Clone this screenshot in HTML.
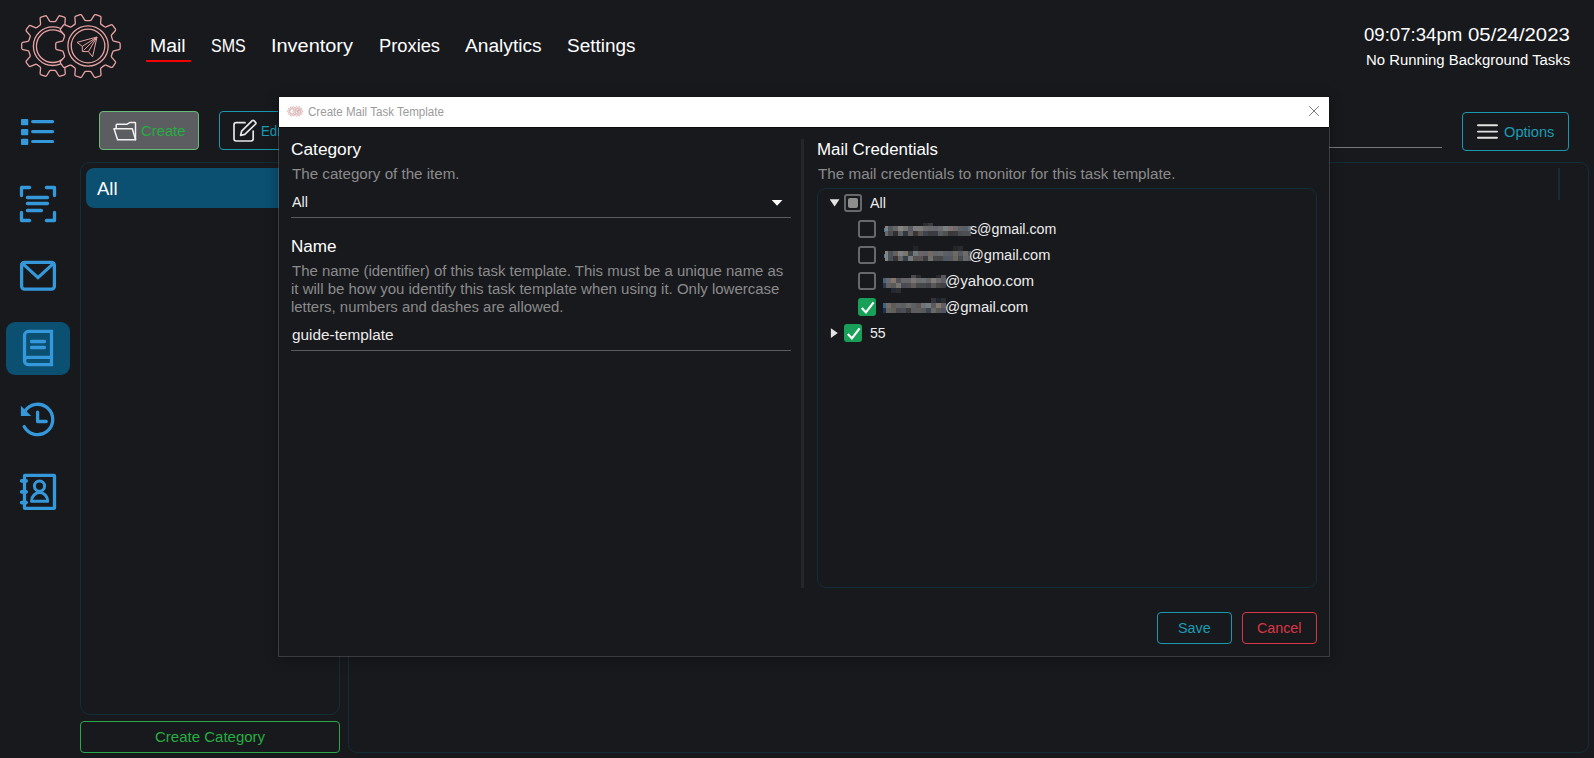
<!DOCTYPE html><html lang="en"><head><meta charset="utf-8"><title>Create Mail Task Template</title><style>
html,body{margin:0;padding:0}
body{width:1594px;height:758px;background:#18191d;position:relative;overflow:hidden;font-family:"Liberation Sans",sans-serif}
.t{position:absolute;white-space:nowrap;transform-origin:0 0;line-height:1;display:block}
.a{position:absolute;box-sizing:border-box}
svg{position:absolute;left:0;top:0;overflow:visible}
.px i{position:absolute;display:block}
.cb{position:absolute;box-sizing:border-box;width:18px;height:18px;border:2px solid #67686b;border-radius:3px}
.cb.on{border:none;background:#18a058}
</style></head><body>
<svg width="1594" height="100" viewBox="0 0 1594 100"><g fill="none" stroke="#e8a2a2" stroke-width="1.3" stroke-linejoin="round"><path d="M76.43,51.74Q76.71,50.88 77.59,50.68L82.61,49.52Q83.73,49.26 83.73,48.11L83.73,43.89Q83.73,42.74 82.61,42.48L77.59,41.32Q76.71,41.12 76.43,40.26L75.27,36.70Q74.99,35.84 75.58,35.16L78.97,31.27Q79.72,30.40 79.04,29.47L76.56,26.05Q75.89,25.12 74.83,25.57L70.08,27.59Q69.25,27.94 68.52,27.41L65.49,25.21Q64.76,24.68 64.84,23.78L65.29,18.64Q65.39,17.50 64.30,17.14L60.28,15.84Q59.19,15.48 58.59,16.47L55.94,20.89Q55.47,21.66 54.57,21.66L50.83,21.66Q49.93,21.66 49.46,20.89L46.81,16.47Q46.21,15.48 45.12,15.84L41.10,17.14Q40.01,17.50 40.11,18.64L40.56,23.78Q40.64,24.68 39.91,25.21L36.88,27.41Q36.15,27.94 35.32,27.59L30.57,25.57Q29.51,25.12 28.84,26.05L26.36,29.47Q25.68,30.40 26.43,31.27L29.82,35.16Q30.41,35.84 30.13,36.70L28.97,40.26Q28.69,41.12 27.81,41.32L22.79,42.48Q21.67,42.74 21.67,43.89L21.67,48.11Q21.67,49.26 22.79,49.52L27.81,50.68Q28.69,50.88 28.97,51.74L30.13,55.30Q30.41,56.16 29.82,56.84L26.43,60.73Q25.68,61.60 26.36,62.53L28.84,65.95Q29.51,66.88 30.57,66.43L35.32,64.41Q36.15,64.06 36.88,64.59L39.91,66.79Q40.64,67.32 40.56,68.22L40.11,73.36Q40.01,74.50 41.10,74.86L45.12,76.16Q46.21,76.52 46.81,75.53L49.46,71.11Q49.93,70.34 50.83,70.34L54.57,70.34Q55.47,70.34 55.94,71.11L58.59,75.53Q59.19,76.52 60.28,76.16L64.30,74.86Q65.39,74.50 65.29,73.36L64.84,68.22Q64.76,67.32 65.49,66.79L68.52,64.59Q69.25,64.06 70.08,64.41L74.83,66.43Q75.89,66.88 76.56,65.95L79.04,62.53Q79.72,61.60 78.97,60.73L75.58,56.84Q74.99,56.16 75.27,55.30Z"/><circle cx="52.7" cy="46.2" r="19.3"/><circle cx="52.7" cy="46.2" r="16.3"/><path d="M112.66,51.99Q112.94,51.13 113.81,50.93L119.05,49.70Q120.17,49.44 120.17,48.29L120.17,43.81Q120.17,42.66 119.05,42.40L113.81,41.17Q112.94,40.97 112.66,40.11L111.43,36.33Q111.15,35.48 111.74,34.79L115.26,30.72Q116.01,29.85 115.33,28.92L112.70,25.30Q112.03,24.37 110.97,24.82L106.01,26.90Q105.18,27.25 104.45,26.72L101.23,24.38Q100.51,23.86 100.58,22.96L101.03,17.60Q101.13,16.45 100.03,16.10L95.78,14.71Q94.69,14.36 94.09,15.34L91.30,19.94Q90.84,20.71 89.94,20.71L85.96,20.71Q85.06,20.71 84.60,19.94L81.81,15.34Q81.21,14.36 80.12,14.71L75.87,16.10Q74.77,16.45 74.87,17.60L75.32,22.96Q75.39,23.86 74.67,24.38L71.45,26.72Q70.72,27.25 69.89,26.90L64.93,24.82Q63.87,24.37 63.20,25.30L60.57,28.92Q59.89,29.85 60.64,30.72L64.16,34.79Q64.75,35.48 64.47,36.33L63.24,40.11Q62.96,40.97 62.09,41.17L56.85,42.40Q55.73,42.66 55.73,43.81L55.73,48.29Q55.73,49.44 56.85,49.70L62.09,50.93Q62.96,51.13 63.24,51.99L64.47,55.77Q64.75,56.62 64.16,57.31L60.64,61.38Q59.89,62.25 60.57,63.18L63.20,66.80Q63.87,67.73 64.93,67.28L69.89,65.20Q70.72,64.85 71.45,65.38L74.67,67.72Q75.39,68.24 75.32,69.14L74.87,74.50Q74.77,75.65 75.87,76.00L80.12,77.39Q81.21,77.74 81.81,76.76L84.60,72.16Q85.06,71.39 85.96,71.39L89.94,71.39Q90.84,71.39 91.30,72.16L94.09,76.76Q94.69,77.74 95.78,77.39L100.03,76.00Q101.13,75.65 101.03,74.50L100.58,69.14Q100.51,68.24 101.23,67.72L104.45,65.38Q105.18,64.85 106.01,65.20L110.97,67.28Q112.03,67.73 112.70,66.80L115.33,63.18Q116.01,62.25 115.26,61.38L111.74,57.31Q111.15,56.62 111.43,55.77Z" fill="#18191d"/><circle cx="88.05" cy="46" r="20.15"/><circle cx="88.05" cy="46" r="16.8"/><path d="M97,37 L77,42.35 L82.3,46.35 V51.55 H88.4 L92.6,56.8 Z M97,37 L82.3,46.35 M96.6,37.6 L83.6,50.4 M97,37 L88.4,51.55" stroke-width="1"/></g></svg>
<div class="a" style="left:146px;top:60px;width:45px;height:2px;background:#f40000"></div>
<div class="a" style="left:6px;top:322px;width:64px;height:53px;border-radius:9px;background:#0b4f71"></div>
<svg width="80" height="758" viewBox="0 0 80 758"><g fill="none" stroke="#3498db" stroke-width="3.3" stroke-linecap="round" stroke-linejoin="round"><g fill="#3498db" stroke="none"><rect x="21" y="119" width="7.3" height="6.2" rx="1"/><rect x="21" y="129" width="7.3" height="6.2" rx="1"/><rect x="21" y="138.8" width="7.3" height="6.2" rx="1"/></g><path d="M32.6,121.6H52.6M32.6,131.6H52.6M32.6,141.5H52.6" stroke-width="3.1"/><path d="M21.5,195.6V187.5H29.6M46.4,187.5H54.5V195.6M54.5,212.4V220.5H46.4M29.6,220.5H21.5V212.4"/><path d="M27.4,197.5H47.5M27.4,203.5H47.5M27.4,210.5H41.4"/><rect x="21.6" y="262.3" width="32.8" height="26.9" rx="3"/><path d="M22.4,263.4L38,277.6L53.6,263.4" stroke-linejoin="miter"/><path d="M51.5,331.4H28.5a4,4 0 0 0 -4,4V360.7a4,4 0 0 0 4,4H51.5Z" stroke-linejoin="miter"/><path d="M24.5,360.4a3,3 0 0 1 3,-3H51.5" stroke-linecap="butt"/><path d="M31.5,341.5H44.5M31.5,347.5H44.5"/><path d="M24.13,426.59A15.2,15.2 0 1 0 24.80,411.17"/><path d="M20.9,405.7V415.9H31.2Z" fill="#3498db" stroke="none"/><path d="M37.6,412.2V421.5H46.2"/><rect x="24.5" y="475.4" width="30" height="33" rx="0.5" stroke-linejoin="miter"/><path d="M21.6,480.9H26.2M21.6,491.9H26.2M21.6,502.6H26.2" stroke-width="3.6"/><circle cx="39.5" cy="486.1" r="5.1" stroke-width="3"/><path d="M31.5,501.2a8.1,8.6 0 0 1 16.2,0Z" stroke-width="3"/></g></svg>
<div class="a" style="left:99px;top:111px;width:100px;height:39px;border:1px solid #68bc78;border-radius:4px;background:#5c5d61"></div>
<svg width="300" height="160" viewBox="0 0 300 160"><g transform="translate(0.4,0.5)" fill="none" stroke="#f2f2f2" stroke-width="1.5" stroke-linejoin="round" stroke-linecap="round"><path d="M115.8,127.6V124.6a0.8,0.8 0 0 1 .8,-.8H126.4L128.8,122.3a1.5,1.5 0 0 1 .8,-.3H134.4a.7,.7 0 0 1 .7,.7V139.2"/><path d="M113.6,128.2H131.9L135.2,139.3H117.2Z"/></g><g fill="none" stroke="#e6e6e6" stroke-width="1.7" stroke-linejoin="round" stroke-linecap="round"><path d="M245,122.7H236.2a2.2,2.2 0 0 0 -2.2,2.2V138.8a2.2,2.2 0 0 0 2.2,2.2H251a2.2,2.2 0 0 0 2.2,-2.2V131"/><path d="M240.6,135.4L241.6,131.2L252.2,120.6a1.2,1.2 0 0 1 1.7,0L255.6,122.3a1.2,1.2 0 0 1 0,1.7L244.8,134.4Z"/></g></svg>
<div class="a" style="left:219px;top:111px;width:90px;height:39px;border:1px solid #1899b0;border-radius:4px"></div>
<div class="a" style="left:1000px;top:147px;width:442px;height:1px;background:#77787a"></div>
<div class="a" style="left:1462px;top:112px;width:107px;height:39px;border:1px solid #1899b0;border-radius:4px"></div>
<svg width="1594" height="160" viewBox="0 0 1594 160"><path d="M1478,125.2H1497M1478,131.6H1497M1478,137.8H1497" stroke="#e2e2e2" stroke-width="1.9" stroke-linecap="round" fill="none"/></svg>
<div class="a" style="left:80px;top:162px;width:260px;height:553px;border:1px solid #132d39;border-radius:10px"></div>
<div class="a" style="left:86px;top:168px;width:248px;height:40px;border-radius:8px;background:#0b4f71"></div>
<div class="a" style="left:80px;top:721px;width:260px;height:32px;border:1px solid #2aa84a;border-radius:4px"></div>
<div class="a" style="left:348px;top:162px;width:1241px;height:591px;border:1px solid #132d39;border-radius:9px"></div>
<div class="a" style="left:1558px;top:168px;width:2px;height:32px;background:#132d39"></div>
<span class="t" style="left:150.32px;top:37.00px;font-size:18px;color:#ffffff;transform:scaleX(1.0805);">Mail</span>
<span class="t" style="left:211.30px;top:37.00px;font-size:18px;color:#ffffff;transform:scaleX(0.8897);">SMS</span>
<span class="t" style="left:271.49px;top:37.00px;font-size:18px;color:#ffffff;transform:scaleX(1.1063);">Inventory</span>
<span class="t" style="left:378.68px;top:37.00px;font-size:18px;color:#ffffff;transform:scaleX(1.0166);">Proxies</span>
<span class="t" style="left:465.20px;top:37.00px;font-size:18px;color:#ffffff;transform:scaleX(1.0635);">Analytics</span>
<span class="t" style="left:567.10px;top:37.00px;font-size:18px;color:#ffffff;transform:scaleX(1.0532);">Settings</span>
<span class="t" style="left:1364.20px;top:26.20px;font-size:18px;color:#ffffff;transform:scaleX(1.0332);">09:07:34pm</span>
<span class="t" style="left:1467.90px;top:26.20px;font-size:18px;color:#ffffff;transform:scaleX(1.1301);">05/24/2023</span>
<span class="t" style="left:1366.24px;top:52.80px;font-size:14px;color:#ffffff;transform:scaleX(1.0637);">No Running Background Tasks</span>
<span class="t" style="left:141.40px;top:123.80px;font-size:14px;color:#26ae41;transform:scaleX(1.0584);">Create</span>
<span class="t" style="left:260.96px;top:123.90px;font-size:14px;color:#1a9db4;transform:scaleX(0.9426);">Edit</span>
<span class="t" style="left:1504.40px;top:124.90px;font-size:14px;color:#1a9db4;transform:scaleX(1.0446);">Options</span>
<span class="t" style="left:97.40px;top:180.10px;font-size:18px;color:#ffffff;transform:scaleX(1.0261);">All</span>
<span class="t" style="left:155.10px;top:729.60px;font-size:14px;color:#26ae41;transform:scaleX(1.0719);">Create Category</span>
<div class="a" style="left:278px;top:96px;width:1052px;height:561px;background:#18191d;border:1px solid rgba(150,150,152,.3);border-top-color:#131418;background-clip:padding-box;box-shadow:0 2px 12px rgba(0,0,0,.28)"></div>
<div class="a" style="left:278px;top:96px;width:1px;height:31px;background:#131418"></div>
<div class="a" style="left:279px;top:97px;width:1050px;height:30px;background:#ffffff"></div>
<div class="a" style="left:1329px;top:96px;width:1px;height:31px;background:#131418"></div>
<div class="a" style="left:279px;top:127px;width:1050px;height:1px;background:#0b0c0e"></div>
<svg width="1594" height="130" viewBox="0 0 1594 130"><g transform="translate(284.2,104.2) scale(0.155)"><g stroke-width="5"><g fill="none" stroke="#cf9a9a" stroke-width="3.8" stroke-linejoin="round"><path d="M76.43,51.74Q76.71,50.88 77.59,50.68L82.61,49.52Q83.73,49.26 83.73,48.11L83.73,43.89Q83.73,42.74 82.61,42.48L77.59,41.32Q76.71,41.12 76.43,40.26L75.27,36.70Q74.99,35.84 75.58,35.16L78.97,31.27Q79.72,30.40 79.04,29.47L76.56,26.05Q75.89,25.12 74.83,25.57L70.08,27.59Q69.25,27.94 68.52,27.41L65.49,25.21Q64.76,24.68 64.84,23.78L65.29,18.64Q65.39,17.50 64.30,17.14L60.28,15.84Q59.19,15.48 58.59,16.47L55.94,20.89Q55.47,21.66 54.57,21.66L50.83,21.66Q49.93,21.66 49.46,20.89L46.81,16.47Q46.21,15.48 45.12,15.84L41.10,17.14Q40.01,17.50 40.11,18.64L40.56,23.78Q40.64,24.68 39.91,25.21L36.88,27.41Q36.15,27.94 35.32,27.59L30.57,25.57Q29.51,25.12 28.84,26.05L26.36,29.47Q25.68,30.40 26.43,31.27L29.82,35.16Q30.41,35.84 30.13,36.70L28.97,40.26Q28.69,41.12 27.81,41.32L22.79,42.48Q21.67,42.74 21.67,43.89L21.67,48.11Q21.67,49.26 22.79,49.52L27.81,50.68Q28.69,50.88 28.97,51.74L30.13,55.30Q30.41,56.16 29.82,56.84L26.43,60.73Q25.68,61.60 26.36,62.53L28.84,65.95Q29.51,66.88 30.57,66.43L35.32,64.41Q36.15,64.06 36.88,64.59L39.91,66.79Q40.64,67.32 40.56,68.22L40.11,73.36Q40.01,74.50 41.10,74.86L45.12,76.16Q46.21,76.52 46.81,75.53L49.46,71.11Q49.93,70.34 50.83,70.34L54.57,70.34Q55.47,70.34 55.94,71.11L58.59,75.53Q59.19,76.52 60.28,76.16L64.30,74.86Q65.39,74.50 65.29,73.36L64.84,68.22Q64.76,67.32 65.49,66.79L68.52,64.59Q69.25,64.06 70.08,64.41L74.83,66.43Q75.89,66.88 76.56,65.95L79.04,62.53Q79.72,61.60 78.97,60.73L75.58,56.84Q74.99,56.16 75.27,55.30Z"/><circle cx="52.7" cy="46.2" r="19.3"/><circle cx="52.7" cy="46.2" r="16.3"/><path d="M112.66,51.99Q112.94,51.13 113.81,50.93L119.05,49.70Q120.17,49.44 120.17,48.29L120.17,43.81Q120.17,42.66 119.05,42.40L113.81,41.17Q112.94,40.97 112.66,40.11L111.43,36.33Q111.15,35.48 111.74,34.79L115.26,30.72Q116.01,29.85 115.33,28.92L112.70,25.30Q112.03,24.37 110.97,24.82L106.01,26.90Q105.18,27.25 104.45,26.72L101.23,24.38Q100.51,23.86 100.58,22.96L101.03,17.60Q101.13,16.45 100.03,16.10L95.78,14.71Q94.69,14.36 94.09,15.34L91.30,19.94Q90.84,20.71 89.94,20.71L85.96,20.71Q85.06,20.71 84.60,19.94L81.81,15.34Q81.21,14.36 80.12,14.71L75.87,16.10Q74.77,16.45 74.87,17.60L75.32,22.96Q75.39,23.86 74.67,24.38L71.45,26.72Q70.72,27.25 69.89,26.90L64.93,24.82Q63.87,24.37 63.20,25.30L60.57,28.92Q59.89,29.85 60.64,30.72L64.16,34.79Q64.75,35.48 64.47,36.33L63.24,40.11Q62.96,40.97 62.09,41.17L56.85,42.40Q55.73,42.66 55.73,43.81L55.73,48.29Q55.73,49.44 56.85,49.70L62.09,50.93Q62.96,51.13 63.24,51.99L64.47,55.77Q64.75,56.62 64.16,57.31L60.64,61.38Q59.89,62.25 60.57,63.18L63.20,66.80Q63.87,67.73 64.93,67.28L69.89,65.20Q70.72,64.85 71.45,65.38L74.67,67.72Q75.39,68.24 75.32,69.14L74.87,74.50Q74.77,75.65 75.87,76.00L80.12,77.39Q81.21,77.74 81.81,76.76L84.60,72.16Q85.06,71.39 85.96,71.39L89.94,71.39Q90.84,71.39 91.30,72.16L94.09,76.76Q94.69,77.74 95.78,77.39L100.03,76.00Q101.13,75.65 101.03,74.50L100.58,69.14Q100.51,68.24 101.23,67.72L104.45,65.38Q105.18,64.85 106.01,65.20L110.97,67.28Q112.03,67.73 112.70,66.80L115.33,63.18Q116.01,62.25 115.26,61.38L111.74,57.31Q111.15,56.62 111.43,55.77Z" fill="#ffffff"/><circle cx="88.05" cy="46" r="20.15"/><circle cx="88.05" cy="46" r="16.8"/><path d="M97,37 L77,42.35 L82.3,46.35 V51.55 H88.4 L92.6,56.8 Z M97,37 L82.3,46.35 M96.6,37.6 L83.6,50.4 M97,37 L88.4,51.55" stroke-width="3.4"/></g></g></g><path d="M1309.5,106.5L1318.5,115.5M1318.5,106.5L1309.5,115.5" stroke="#7c7c7c" stroke-width="1" stroke-linecap="square" fill="none"/></svg>
<div class="a" style="left:291px;top:217px;width:500px;height:1px;background:#5a5b5e"></div>
<div class="a" style="left:291px;top:350px;width:500px;height:1px;background:#5a5b5e"></div>
<svg width="800" height="220" viewBox="0 0 800 220"><path d="M771.8,200H782.4L777.1,205.8Z" fill="#ffffff"/></svg>
<div class="a" style="left:801px;top:139px;width:3px;height:449px;background:#25262a"></div>
<div class="a" style="left:817px;top:188px;width:500px;height:400px;border:1px solid #132d39;border-radius:9px"></div>
<svg width="900" height="350" viewBox="0 0 900 350"><path d="M829.7,199.3H839.5L834.6,206.6Z" fill="#e4e4e4"/><path d="M830.9,328.3V337.9L837.8,333.1Z" fill="#e4e4e4"/><g fill="none" stroke="#fff" stroke-width="2.2"><path d="M862,304.2L865.6,308.2L872.4,299.6"/><path d="M848,330.2L851.6,334.2L858.4,325.6"/></g></svg>
<div class="cb" style="left:844px;top:194px"></div><div class="a" style="left:848px;top:198px;width:10px;height:10px;border-radius:2px;background:#8e8e8e"></div>
<div class="cb" style="left:858px;top:220px"></div>
<div class="cb" style="left:858px;top:246px"></div>
<div class="cb" style="left:858px;top:272px"></div>
<div class="cb on" style="left:858px;top:298px"></div>
<div class="cb on" style="left:844px;top:324px"></div>
<div class="px"><i style="left:885px;top:226px;width:3px;height:5px;background:#8a8078"></i><i style="left:888px;top:226px;width:5px;height:5px;background:#505a64"></i><i style="left:893px;top:226px;width:5px;height:5px;background:#6a6562"></i><i style="left:898px;top:226px;width:5px;height:5px;background:#848386"></i><i style="left:903px;top:226px;width:5px;height:5px;background:#77756f"></i><i style="left:908px;top:226px;width:5px;height:5px;background:#5a5a66"></i><i style="left:913px;top:226px;width:5px;height:5px;background:#7a7c7e"></i><i style="left:918px;top:226px;width:5px;height:5px;background:#7c7c78"></i><i style="left:923px;top:226px;width:5px;height:5px;background:#6c6c6e"></i><i style="left:928px;top:226px;width:5px;height:5px;background:#68696b"></i><i style="left:933px;top:226px;width:5px;height:5px;background:#62666e"></i><i style="left:938px;top:226px;width:5px;height:5px;background:#6c6c6c"></i><i style="left:943px;top:226px;width:5px;height:5px;background:#78807e"></i><i style="left:948px;top:226px;width:5px;height:5px;background:#7c7274"></i><i style="left:953px;top:226px;width:5px;height:5px;background:#6e6c6a"></i><i style="left:958px;top:226px;width:5px;height:5px;background:#5e6064"></i><i style="left:963px;top:226px;width:5px;height:5px;background:#56606a"></i><i style="left:968px;top:226px;width:3px;height:5px;background:#6e6e6e"></i><i style="left:885px;top:231px;width:3px;height:5px;background:#6a6a64"></i><i style="left:888px;top:231px;width:5px;height:5px;background:#484c54"></i><i style="left:893px;top:231px;width:5px;height:5px;background:#342e2c"></i><i style="left:898px;top:231px;width:5px;height:5px;background:#5c6264"></i><i style="left:903px;top:231px;width:5px;height:5px;background:#303642"></i><i style="left:908px;top:231px;width:5px;height:5px;background:#5e5e5c"></i><i style="left:913px;top:231px;width:5px;height:5px;background:#3a3638"></i><i style="left:918px;top:231px;width:5px;height:5px;background:#585250"></i><i style="left:923px;top:231px;width:5px;height:5px;background:#3e444c"></i><i style="left:928px;top:231px;width:5px;height:5px;background:#3c3a3c"></i><i style="left:933px;top:231px;width:5px;height:5px;background:#383c46"></i><i style="left:938px;top:231px;width:5px;height:5px;background:#585a5e"></i><i style="left:943px;top:231px;width:5px;height:5px;background:#4e524e"></i><i style="left:948px;top:231px;width:5px;height:5px;background:#3e383a"></i><i style="left:953px;top:231px;width:5px;height:5px;background:#3c3c40"></i><i style="left:958px;top:231px;width:5px;height:5px;background:#4a4c50"></i><i style="left:963px;top:231px;width:5px;height:5px;background:#4c5052"></i><i style="left:968px;top:231px;width:3px;height:5px;background:#505050"></i><i style="left:923px;top:223px;width:5px;height:3px;background:#2c2e32"></i><i style="left:928px;top:223px;width:5px;height:3px;background:#3a3b3f"></i><i style="left:884px;top:228px;width:1px;height:4px;background:#2a7fd0"></i><i style="left:885px;top:251px;width:3px;height:5px;background:#8a8278"></i><i style="left:888px;top:251px;width:5px;height:5px;background:#4a525e"></i><i style="left:893px;top:251px;width:5px;height:5px;background:#66605c"></i><i style="left:898px;top:251px;width:5px;height:5px;background:#808084"></i><i style="left:903px;top:251px;width:5px;height:5px;background:#78746e"></i><i style="left:908px;top:251px;width:5px;height:5px;background:#404246"></i><i style="left:913px;top:251px;width:5px;height:5px;background:#6e7a7a"></i><i style="left:918px;top:251px;width:5px;height:5px;background:#6a6468"></i><i style="left:923px;top:251px;width:5px;height:5px;background:#646468"></i><i style="left:928px;top:251px;width:5px;height:5px;background:#726a62"></i><i style="left:933px;top:251px;width:5px;height:5px;background:#62666a"></i><i style="left:938px;top:251px;width:5px;height:5px;background:#66686a"></i><i style="left:943px;top:251px;width:5px;height:5px;background:#5c6064"></i><i style="left:948px;top:251px;width:5px;height:5px;background:#5a5e64"></i><i style="left:953px;top:251px;width:5px;height:5px;background:#6e6a62"></i><i style="left:958px;top:251px;width:5px;height:5px;background:#545a66"></i><i style="left:963px;top:251px;width:5px;height:5px;background:#706a66"></i><i style="left:968px;top:251px;width:3px;height:5px;background:#4c525a"></i><i style="left:885px;top:256px;width:3px;height:5px;background:#8a8276"></i><i style="left:888px;top:256px;width:5px;height:5px;background:#46505c"></i><i style="left:893px;top:256px;width:5px;height:5px;background:#3a3432"></i><i style="left:898px;top:256px;width:5px;height:5px;background:#666666"></i><i style="left:903px;top:256px;width:5px;height:5px;background:#36404a"></i><i style="left:908px;top:256px;width:5px;height:5px;background:#78787c"></i><i style="left:913px;top:256px;width:5px;height:5px;background:#54544e"></i><i style="left:918px;top:256px;width:5px;height:5px;background:#5c5258"></i><i style="left:923px;top:256px;width:5px;height:5px;background:#3a3c40"></i><i style="left:928px;top:256px;width:5px;height:5px;background:#6e6e6a"></i><i style="left:933px;top:256px;width:5px;height:5px;background:#484848"></i><i style="left:938px;top:256px;width:5px;height:5px;background:#464646"></i><i style="left:943px;top:256px;width:5px;height:5px;background:#4e5862"></i><i style="left:948px;top:256px;width:5px;height:5px;background:#54585e"></i><i style="left:953px;top:256px;width:5px;height:5px;background:#6a665e"></i><i style="left:958px;top:256px;width:5px;height:5px;background:#464a52"></i><i style="left:963px;top:256px;width:5px;height:5px;background:#686866"></i><i style="left:968px;top:256px;width:3px;height:5px;background:#5e5e5e"></i><i style="left:913px;top:246px;width:5px;height:5px;background:#202628"></i><i style="left:918px;top:246px;width:5px;height:5px;background:#1c191d"></i><i style="left:953px;top:246px;width:5px;height:5px;background:#242528"></i><i style="left:958px;top:246px;width:5px;height:5px;background:#2a2b2e"></i><i style="left:884px;top:254px;width:1px;height:4px;background:#2a7fd0"></i><i style="left:883px;top:278px;width:3px;height:5px;background:#4a6274"></i><i style="left:886px;top:278px;width:5px;height:5px;background:#6a6a72"></i><i style="left:891px;top:278px;width:5px;height:5px;background:#85766a"></i><i style="left:896px;top:278px;width:5px;height:5px;background:#545458"></i><i style="left:901px;top:278px;width:5px;height:5px;background:#66666a"></i><i style="left:906px;top:278px;width:5px;height:5px;background:#666668"></i><i style="left:911px;top:278px;width:5px;height:5px;background:#7a7674"></i><i style="left:916px;top:278px;width:5px;height:5px;background:#6c6c6e"></i><i style="left:921px;top:278px;width:5px;height:5px;background:#6c6e70"></i><i style="left:926px;top:278px;width:5px;height:5px;background:#646468"></i><i style="left:931px;top:278px;width:5px;height:5px;background:#807a74"></i><i style="left:936px;top:278px;width:5px;height:5px;background:#6a6a6e"></i><i style="left:941px;top:278px;width:5px;height:5px;background:#5e5e60"></i><i style="left:883px;top:283px;width:3px;height:5px;background:#2c3a4c"></i><i style="left:886px;top:283px;width:5px;height:5px;background:#5e6064"></i><i style="left:891px;top:283px;width:5px;height:5px;background:#5c5a56"></i><i style="left:896px;top:283px;width:5px;height:5px;background:#76726e"></i><i style="left:901px;top:283px;width:5px;height:5px;background:#484a58"></i><i style="left:906px;top:283px;width:5px;height:5px;background:#4e4e50"></i><i style="left:911px;top:283px;width:5px;height:5px;background:#625c5a"></i><i style="left:916px;top:283px;width:5px;height:5px;background:#46484c"></i><i style="left:921px;top:283px;width:5px;height:5px;background:#46484c"></i><i style="left:926px;top:283px;width:5px;height:5px;background:#404248"></i><i style="left:931px;top:283px;width:5px;height:5px;background:#5a5854"></i><i style="left:936px;top:283px;width:5px;height:5px;background:#464648"></i><i style="left:941px;top:283px;width:5px;height:5px;background:#424044"></i><i style="left:911px;top:275px;width:5px;height:3px;background:#4a4b4e"></i><i style="left:916px;top:275px;width:5px;height:3px;background:#2c2c30"></i><i style="left:936px;top:275px;width:5px;height:3px;background:#2a282c"></i><i style="left:941px;top:275px;width:5px;height:3px;background:#58585a"></i><i style="left:891px;top:288px;width:5px;height:5px;background:#242830"></i><i style="left:896px;top:288px;width:5px;height:5px;background:#2e2c2e"></i><i style="left:883px;top:303px;width:3px;height:5px;background:#3a6286"></i><i style="left:886px;top:303px;width:5px;height:5px;background:#746c68"></i><i style="left:891px;top:303px;width:5px;height:5px;background:#5e5a58"></i><i style="left:896px;top:303px;width:5px;height:5px;background:#606164"></i><i style="left:901px;top:303px;width:5px;height:5px;background:#5c5e62"></i><i style="left:906px;top:303px;width:5px;height:5px;background:#6a6a6a"></i><i style="left:911px;top:303px;width:5px;height:5px;background:#5c6062"></i><i style="left:916px;top:303px;width:5px;height:5px;background:#5e5452"></i><i style="left:921px;top:303px;width:5px;height:5px;background:#70727c"></i><i style="left:926px;top:303px;width:5px;height:5px;background:#747c80"></i><i style="left:931px;top:303px;width:5px;height:5px;background:#5c5c60"></i><i style="left:936px;top:303px;width:5px;height:5px;background:#82766e"></i><i style="left:941px;top:303px;width:5px;height:5px;background:#626064"></i><i style="left:883px;top:308px;width:3px;height:5px;background:#1c3250"></i><i style="left:886px;top:308px;width:5px;height:5px;background:#666462"></i><i style="left:891px;top:308px;width:5px;height:5px;background:#625e58"></i><i style="left:896px;top:308px;width:5px;height:5px;background:#4c4a4e"></i><i style="left:901px;top:308px;width:5px;height:5px;background:#4a4e56"></i><i style="left:906px;top:308px;width:5px;height:5px;background:#3c3c3c"></i><i style="left:911px;top:308px;width:5px;height:5px;background:#5c5c62"></i><i style="left:916px;top:308px;width:5px;height:5px;background:#5e5e5e"></i><i style="left:921px;top:308px;width:5px;height:5px;background:#565a5e"></i><i style="left:926px;top:308px;width:5px;height:5px;background:#3e4652"></i><i style="left:931px;top:308px;width:5px;height:5px;background:#686868"></i><i style="left:936px;top:308px;width:5px;height:5px;background:#585854"></i><i style="left:941px;top:308px;width:5px;height:5px;background:#545460"></i><i style="left:931px;top:298px;width:5px;height:5px;background:#34323a"></i><i style="left:936px;top:298px;width:5px;height:5px;background:#1c242e"></i><i style="left:941px;top:298px;width:5px;height:5px;background:#2c2c2e"></i></div>
<div class="a" style="left:1157px;top:612px;width:75px;height:32px;border:1px solid #1899b0;border-radius:4px"></div>
<div class="a" style="left:1242px;top:612px;width:75px;height:32px;border:1px solid #d93645;border-radius:4px"></div>
<svg width="900" height="350" viewBox="0 0 900 350"><g fill="none" stroke="#fff" stroke-width="2.2"><path d="M861.8,308L865.9,312.4L873.6,302.4"/><path d="M847.8,334L851.9,338.4L859.6,328.4"/></g></svg>
<span class="t" style="left:307.60px;top:106.40px;font-size:12px;color:#9b9b9b;transform:scaleX(0.9646);">Create Mail Task Template</span>
<span class="t" style="left:291.40px;top:142.20px;font-size:16px;color:#ffffff;transform:scaleX(1.0798);">Category</span>
<span class="t" style="left:292.40px;top:166.90px;font-size:14px;color:#8b8b8b;transform:scaleX(1.0821);">The category of the item.</span>
<span class="t" style="left:292.40px;top:194.90px;font-size:14px;color:#ececec;transform:scaleX(1.0228);">All</span>
<span class="t" style="left:290.53px;top:238.60px;font-size:16px;color:#ffffff;transform:scaleX(1.0675);">Name</span>
<span class="t" style="left:291.80px;top:263.80px;font-size:14px;color:#8b8b8b;transform:scaleX(1.0671);">The name (identifier) of this task template. This must be a unique name as</span>
<span class="t" style="left:291.30px;top:282.00px;font-size:14px;color:#8b8b8b;transform:scaleX(1.0712);">it will be how you identify this task template when using it. Only lowercase</span>
<span class="t" style="left:291.30px;top:300.10px;font-size:14px;color:#8b8b8b;transform:scaleX(1.0641);">letters, numbers and dashes are allowed.</span>
<span class="t" style="left:292.40px;top:327.80px;font-size:14px;color:#ececec;transform:scaleX(1.0956);">guide-template</span>
<span class="t" style="left:816.55px;top:141.60px;font-size:16px;color:#ffffff;transform:scaleX(1.0544);">Mail Credentials</span>
<span class="t" style="left:817.60px;top:166.90px;font-size:14px;color:#8b8b8b;transform:scaleX(1.0884);">The mail credentials to monitor for this task template.</span>
<span class="t" style="left:870.10px;top:196.00px;font-size:14px;color:#ececec;transform:scaleX(1.0228);">All</span>
<span class="t" style="left:970.00px;top:222.00px;font-size:14px;color:#ececec;transform:scaleX(1.0149);">s@gmail.com</span>
<span class="t" style="left:969.36px;top:248.00px;font-size:14px;color:#ececec;transform:scaleX(1.0427);">@gmail.com</span>
<span class="t" style="left:944.92px;top:274.00px;font-size:14px;color:#ececec;transform:scaleX(1.0773);">@yahoo.com</span>
<span class="t" style="left:944.93px;top:300.00px;font-size:14px;color:#ececec;transform:scaleX(1.0662);">@gmail.com</span>
<span class="t" style="left:869.80px;top:326.00px;font-size:14px;color:#ececec;transform:scaleX(1.0072);">55</span>
<span class="t" style="left:1177.60px;top:620.60px;font-size:14px;color:#1a9db4;transform:scaleX(1.0210);">Save</span>
<span class="t" style="left:1257.00px;top:620.60px;font-size:14px;color:#dc3545;transform:scaleX(1.0191);">Cancel</span>
</body></html>
